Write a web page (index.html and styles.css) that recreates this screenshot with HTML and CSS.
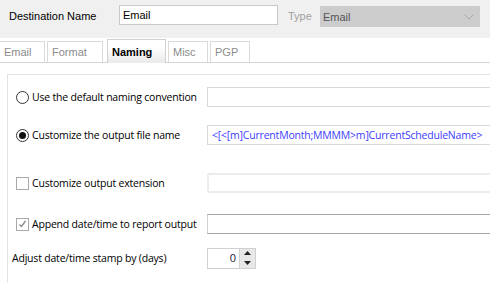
FILE: index.html
```html
<!DOCTYPE html>
<html>
<head>
<meta charset="utf-8">
<link rel="stylesheet" href="styles.css">
</head>
<body>
<div class="header">
  <span class="dest-label">Destination Name</span>
  <div class="field name-field">Email</div>
  <span class="type-label">Type</span>
  <div class="select">
    <span>Email</span>
    <svg class="chevron" width="10" height="6" viewBox="0 0 10 6"><path d="M0.5 0.5 L5 5 L9.5 0.5" fill="none" stroke="#a8a8a8" stroke-width="1"/></svg>
  </div>
</div>
<div class="tabs">
  <div class="tab tab-email">Email</div>
  <div class="tab tab-format">Format</div>
  <div class="tab tab-active">Naming</div>
  <div class="tab tab-misc">Misc</div>
  <div class="tab tab-pgp">PGP</div>
</div>
<div class="panel">
  <div class="row row-1">
    <label class="opt"><span class="radio"></span>Use the default naming convention</label>
    <div class="box box-plain"></div>
  </div>
  <div class="row row-2">
    <label class="opt"><span class="radio radio-on"></span>Customize the output file name</label>
    <div class="box box-plain box-blue">&lt;[&lt;[m]CurrentMonth;MMMM&gt;m]CurrentScheduleName&gt;</div>
  </div>
  <div class="row row-3">
    <label class="opt"><span class="check"></span>Customize output extension</label>
    <div class="box box-disabled"></div>
  </div>
  <div class="row row-4">
    <label class="opt"><span class="check check-on"><svg width="9" height="8" viewBox="0 0 9 8"><path d="M1.5 4.5 L3.5 6.5 L7.5 1" fill="none" stroke="#8a8a8a" stroke-width="1.3"/></svg></span>Append date/time to report output</label>
    <div class="box box-dark"></div>
  </div>
  <div class="row row-5">
    <span class="plain-label">Adjust date/time stamp by (days)</span>
    <div class="spinner">
      <span class="spin-value">0</span>
      <span class="spin-buttons">
        <span class="spin-btn"><svg width="7" height="4" viewBox="0 0 7 4"><path d="M0 4 L3.5 0 L7 4 Z" fill="#222"/></svg></span>
        <span class="spin-btn"><svg width="7" height="4" viewBox="0 0 7 4"><path d="M0 0 L3.5 4 L7 0 Z" fill="#222"/></svg></span>
      </span>
    </div>
  </div>
</div>
</body>
</html>
```
FILE: styles.css
```css
html, body {
  margin: 0;
  padding: 0;
  background: #ffffff;
  overflow: hidden;
}
body {
  width: 490px;
  height: 283px;
  display: flex;
  flex-direction: column;
  font-family: "Liberation Sans", Arial, sans-serif;
  font-size: 11px;
  color: #000;
}
.header {
  flex: none;
  height: 38px;
  background: #f0f0f0;
  display: flex;
  align-items: flex-start;
  padding-left: 9px;
  box-sizing: border-box;
}
.dest-label {
  margin-top: 10px;
  width: 110px;
}
.field {
  box-sizing: border-box;
  margin-top: 5px;
  height: 20px;
  background: #fff;
  border: 1px solid #c9c9c9;
  padding: 3px 3px;
  line-height: 12px;
}
.name-field {
  width: 159px;
}
.type-label {
  margin-top: 10px;
  margin-left: 10px;
  width: 32px;
  color: #a0a0a0;
}
.select {
  box-sizing: border-box;
  margin-top: 6px;
  width: 160px;
  height: 21px;
  background: #cccccc;
  color: #555;
  display: flex;
  align-items: center;
  justify-content: space-between;
  padding: 0 6px 0 3px;
}
.chevron {
  margin-top: 1px;
}
.tabs {
  flex: none;
  height: 25px;
  border-bottom: 1px solid #d6d6d6;
  box-sizing: border-box;
  display: flex;
  align-items: flex-end;
}
.tab {
  box-sizing: border-box;
  flex: none;
  height: 21px;
  border: 1px solid #dadada;
  border-bottom: none;
  color: #8c8c8c;
  padding: 4px 0 0 4px;
  line-height: 13px;
  margin-right: 2px;
}
.tab-email { width: 46px; margin-left: -1px; }
.tab-format { width: 56px; margin-right: 4px; }
.tab-active {
  width: 59px;
  height: 24px;
  margin-bottom: -1px;
  border-color: #d0d0d0;
  background: linear-gradient(#ffffff 30%, #e9e9e9);
  color: #000;
  font-weight: bold;
  padding-top: 6px;
  margin-right: 2px;
}
.tab-misc { width: 40px; padding-left: 4px; }
.tab-pgp { width: 40px; }

.panel {
  flex: 1;
  min-height: 0;
  overflow: hidden;
  margin-top: 11px;
  margin-left: 7px;
  border-top: 1px solid #e3e3e3;
  border-left: 1px solid #e3e3e3;
  padding-top: 12px;
}
.row {
  display: flex;
  align-items: center;
  height: 20px;
}
.row-2 { margin-top: 18px; }
.row-3 { margin-top: 28px; }
.row-4 { margin-top: 21px; }
.row-5 { margin-top: 14px; }
.opt, .plain-label {
  flex: none;
  width: 199px;
  box-sizing: border-box;
  font-family: "Open Sans", sans-serif;
  font-size: 10.5px;
  letter-spacing: -0.2px;
}
.opt {
  display: flex;
  align-items: center;
  padding-left: 8px;
}
.plain-label {
  padding-left: 4px;
}
.radio {
  box-sizing: border-box;
  flex: none;
  width: 13px;
  height: 13px;
  border: 1px solid #333;
  border-radius: 50%;
  margin-right: 3px;
  display: flex;
  align-items: center;
  justify-content: center;
  background: #fff;
}
.radio-on::after {
  content: "";
  width: 7px;
  height: 7px;
  border-radius: 50%;
  background: #111;
}
.check {
  box-sizing: border-box;
  flex: none;
  width: 13px;
  height: 13px;
  border: 1px solid #a9a9a9;
  margin-right: 3px;
  display: flex;
  align-items: center;
  justify-content: center;
  background: #fff;
}
.box {
  flex: none;
  box-sizing: border-box;
  height: 20px;
  width: 300px;
  background: #fff;
  border: 1px solid #d9d9d9;
  padding: 2px 4px;
  line-height: 14px;
  white-space: nowrap;
}
.box-blue {
  color: #3d3dff;
  font-family: "Open Sans", sans-serif;
  font-size: 10.5px;
  letter-spacing: -0.2px;
}
.box-disabled {
  border: 2px solid #ececec;
  border-radius: 2px;
}
.box-dark {
  border: 1px solid #cfcfcf;
  border-top-color: #a3a3a3;
  border-bottom-color: #a3a3a3;
}
.spinner {
  flex: none;
  box-sizing: border-box;
  width: 49px;
  height: 21px;
  border: 1px solid #d0d0d0;
  display: flex;
  background: #fff;
}
.spin-value {
  flex: 1;
  text-align: right;
  padding-right: 3px;
  line-height: 18px;
  font-family: "Open Sans", sans-serif;
  font-size: 11px;
  color: #223;
}
.spin-buttons {
  width: 15px;
  display: flex;
  flex-direction: column;
  background: #e8e8e8;
  border-left: 1px solid #d0d0d0;
}
.spin-btn {
  flex: 1;
  display: flex;
  align-items: center;
  justify-content: center;
}
```
